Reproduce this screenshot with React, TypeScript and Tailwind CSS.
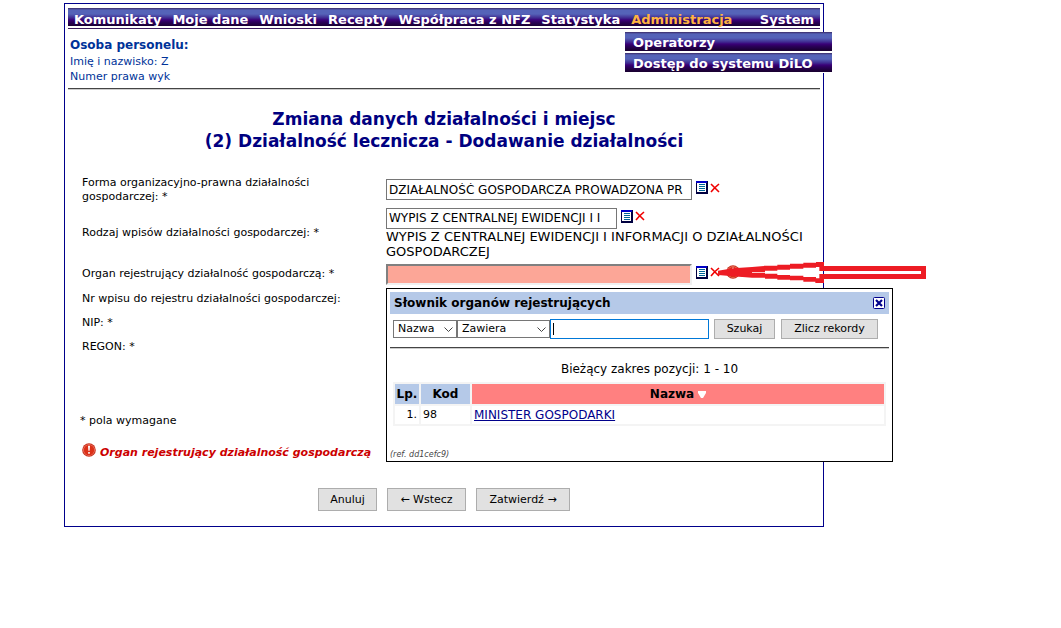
import type { ReactNode } from "react";

const menu = [
  "Komunikaty",
  "Moje dane",
  "Wnioski",
  "Recepty",
  "Współpraca z NFZ",
  "Statystyka",
  "Administracja",
];
const submenu = ["Operatorzy", "Dostęp do systemu DiLO"];
const rows = [{ lp: 1, code: "98", name: "MINISTER GOSPODARKI" }];

const barStyle =
  "bg-[linear-gradient(to_bottom,#3b2a66_0px,#5563b8_2px,#5563b8_6px,#3f2a90_10px,#3a0078_12px,#2c005c_14px,#1a0033_18px)]";
const buttonStyle =
  "cursor-pointer border border-[#adadad] bg-[#e1e1e1] text-[11px] leading-4 text-black";

const ListIcon = () => (
  <svg width="12" height="13" viewBox="0 0 12 13" shapeRendering="crispEdges" aria-hidden="true">
    <rect width="12" height="13" fill="#000040" />
    <rect width="11" height="2" fill="#0000c8" />
    <rect x="1" y="2" width="9" height="9" fill="#fff" />
    <path d="M3 3.5h6M3 5.5h6M3 7.5h6M3 9.5h6" stroke="#006699" />
  </svg>
);

const CrossIcon = () => (
  <svg width="10" height="10" viewBox="0 0 10 10" aria-hidden="true">
    <path d="M1 1l3.500 3.500L9 9M9 1L4.500 5L1 9" stroke="#f00000" strokeWidth="1.6" fill="none" />
  </svg>
);

const ErrorIcon = () => (
  <svg width="14" height="14" viewBox="0 0 14 14" className="shrink-0" aria-hidden="true">
    <circle cx="7" cy="7" r="6.800" fill="#c8301c" />
    <circle cx="7" cy="7" r="5.800" fill="#f08878" />
    <circle cx="7" cy="7" r="5.200" fill="#dc3018" />
    <path d="M6 2.800h2l-.4 5H6.400zM6.200 9h1.600v1.700H6.200z" fill="#fff" />
  </svg>
);

const Divider = () => <hr className="h-[2px] border-0 border-t border-[#444] bg-[#ccc]" />;

const PickerButtons = ({ what }: { what: string }) => (
  <span className="mb-1 ml-1 flex items-center gap-[2px]">
    <button type="button" aria-label={`Wybierz: ${what}`} className="cursor-pointer">
      <ListIcon />
    </button>
    <button type="button" aria-label={`Wyczyść: ${what}`} className="cursor-pointer">
      <CrossIcon />
    </button>
  </span>
);

const Row = ({
  id,
  label,
  className,
  children,
}: {
  id?: string;
  label: string;
  className: string;
  children?: ReactNode;
}) => (
  <div className={`flex items-center ${className}`}>
    <label htmlFor={id} className="w-[304px] shrink-0 pr-8 leading-[14px] text-[11px]">
      {label}
    </label>
    <div className="min-w-0 flex-1">{children}</div>
  </div>
);

const TopMenu = () => (
  <nav className="relative z-10 border-b border-[#3a1a5c] pb-[2px] text-[13px] font-bold text-white">
    <ul className={`flex h-[18px] items-center gap-[11px] px-[6px] pt-[5px] ${barStyle}`}>
      {menu.map((item) => (
        <li key={item}>
          <a href="#" className={item === "Administracja" ? "text-[#ffb440]" : ""}>
            {item}
          </a>
        </li>
      ))}
      <li className="ml-auto">
        <a href="#">System</a>
      </li>
    </ul>
    <ul className="absolute top-6 -right-3 flex w-[207px] flex-col gap-[2px] bg-white pb-px">
      {submenu.map((item) => (
        <li key={item} className={`h-[19px] px-2 leading-[22px] ${barStyle}`}>
          <a href="#">{item}</a>
        </li>
      ))}
    </ul>
  </nav>
);

const FilterSelect = ({
  label,
  options,
  className,
}: {
  label: string;
  options: string[];
  className: string;
}) => (
  <div className={`relative h-[18px] ${className}`}>
    <select
      aria-label={label}
      className="block h-full w-full appearance-none border border-[#767676] bg-white pl-1 text-[11px] leading-4"
    >
      {options.map((option) => (
        <option key={option}>{option}</option>
      ))}
    </select>
    <svg
      width="9"
      height="6"
      viewBox="0 0 9 6"
      className="pointer-events-none absolute top-[7px] right-1"
      aria-hidden="true"
    >
      <path d="M0.500 0.500l4 4l4-4" stroke="#444" fill="none" />
    </svg>
  </div>
);

const Dictionary = () => (
  <section className="absolute top-[288px] left-[386px] z-10 w-[507px] border border-black bg-white p-[3px] pb-0">
    <header className="flex h-[22px] items-center justify-between bg-[#b5c9e8] px-1 text-[12px] font-bold">
      <h2>Słownik organów rejestrujących</h2>
      <button type="button" aria-label="Zamknij" className="cursor-pointer">
        <svg width="12" height="12" viewBox="0 0 12 12" aria-hidden="true">
          <rect x="0.500" y="0.500" width="11" height="11" rx="1" fill="#fff" stroke="#00008b" />
          <path d="M3 3l6 6M9 3L3 9" stroke="#00008b" strokeWidth="2.200" />
        </svg>
      </button>
    </header>
    <form className="flex h-[33px] items-center px-[3px] pb-1">
      <FilterSelect label="Kolumna" options={["Nazwa", "Kod"]} className="w-16" />
      <FilterSelect label="Warunek" options={["Zawiera", "Równe"]} className="w-[93px]" />
      <div className="relative">
        <input
          aria-label="Szukana wartość"
          className="peer block h-5 w-[159px] border border-[#0078d7] px-[3px] text-[12px] outline-none"
        />
        <span className="pointer-events-none absolute top-1 left-[3px] h-3 w-px bg-black peer-focus:hidden" />
      </div>
      <button type="button" className={`ml-[5px] h-5 w-[61px] ${buttonStyle}`}>
        Szukaj
      </button>
      <button type="button" className={`ml-[6px] h-5 w-[97px] ${buttonStyle}`}>
        Zlicz rekordy
      </button>
    </form>
    <Divider />
    <p className="pt-3 pb-[5px] pl-5 text-center text-[12px] leading-4">
      Bieżący zakres pozycji: 1 - 10
    </p>
    <table className="ml-[3px] w-[493px] border-separate border-spacing-[2px] bg-[#f4f4f4] text-left">
      <thead className="text-[12px] leading-5">
        <tr>
          <th className="w-6 bg-[#b5c9e8] text-center">Lp.</th>
          <th className="w-[49px] bg-[#b5c9e8] text-center">Kod</th>
          <th className="bg-[#ff8080] text-center">
            Nazwa
            <svg width="8" height="7" viewBox="0 0 8 7" className="ml-1 inline" aria-hidden="true">
              <path d="M0 0h8v2L5 7H3L0 2z" fill="#fff" />
            </svg>
          </th>
        </tr>
      </thead>
      <tbody className="text-[11px] leading-[18px]">
        {rows.map((row) => (
          <tr key={row.code}>
            <td className="bg-white pr-[2px] text-right">{row.lp}.</td>
            <td className="bg-white pl-[2px]">{row.code}</td>
            <td className="bg-white pl-[2px] text-[12px]">
              <a href="#" className="text-[#00008b] underline">
                {row.name}
              </a>
            </td>
          </tr>
        ))}
      </tbody>
    </table>
    <p className="mt-[22px] text-[8px] italic leading-[13px] text-[#444]">(ref. dd1cefc9)</p>
  </section>
);

// hand-drawn marker pointing at the clear button
const Pointer = () => (
  <svg
    width="208"
    height="21"
    viewBox="84 36 624 63"
    className="pointer-events-none absolute top-[262px] left-[718px] z-20"
    fill="#ed1c24"
    aria-hidden="true"
  >
    <path d="M84 62L129 55L186 51V83L129 79L84 75z" />
    <path d="M186 51L222 48V47H262V44H300V41H340V38H378V36H402V48H708V87H402V99H376V95H340V91H300V89H262V86H225V83H186V68H225V71H262V75H300V77H340V81H378V85H388V72H693V63H388V51H378V53H340V56H300V59H262V62H225V66H186z" />
  </svg>
);

export default function App() {
  return (
    <div className="relative bg-white pt-[3px] pr-[237px] pb-10 pl-16 font-['DejaVu_Sans',Verdana,sans-serif] text-black">
      <main className="border border-[#00008b] px-[3px] pt-1 pb-[15px]">
        <TopMenu />
        <div className="mt-2 mb-1 px-[2px] text-[11px] leading-[15px] text-[#003399]">
          <p className="text-[12px] font-bold leading-[17px]">Osoba personelu:</p>
          <p>Imię i nazwisko: Z</p>
          <p>Numer prawa wyk</p>
        </div>
        <Divider />

        <h1 className="mt-[18px] text-center text-[17px] font-bold leading-[22px] text-[#000080]">
          Zmiana danych działalności i miejsc
          <br />
          (2) Działalność lecznicza - Dodawanie działalności
        </h1>

        <form className="mt-[22px] px-[14px]">
          <Row id="forma" label="Forma organizacyjno-prawna działalności gospodarczej: *" className="h-[31px]">
            <div className="flex items-center">
              <input
                id="forma"
                defaultValue="DZIAŁALNOŚĆ GOSPODARCZA PROWADZONA PR"
                className="h-[21px] w-[306px] border border-[#767676] px-[2px] text-[12px]"
              />
              <PickerButtons what="forma" />
            </div>
          </Row>
          <Row id="rodzaj" label="Rodzaj wpisów działalności gospodarczej: *" className="h-14">
            <div className="flex items-center">
              <input
                id="rodzaj"
                defaultValue="WYPIS Z CENTRALNEJ EWIDENCJI I I"
                className="h-[21px] w-[231px] border border-[#767676] px-[2px] text-[12px]"
              />
              <PickerButtons what="rodzaj" />
            </div>
            <p className="text-[13px] leading-[15px]">
              WYPIS Z CENTRALNEJ EWIDENCJI I INFORMACJI O DZIAŁALNOŚCI GOSPODARCZEJ
            </p>
          </Row>
          <Row id="organ" label="Organ rejestrujący działalność gospodarczą: *" className="h-[26px]">
            <div className="flex items-center">
              <input
                id="organ"
                className="h-[21px] w-[306px] border-2 border-t-[#808080] border-r-[#f0f0f0] border-b-[#f0f0f0] border-l-[#808080] bg-[#fca697] px-[2px] text-[12px]"
              />
              <PickerButtons what="organ" />
              <span className="mb-1 ml-[6px]">
                <ErrorIcon />
              </span>
            </div>
          </Row>
          <Row label="Nr wpisu do rejestru działalności gospodarczej:" className="h-6 whitespace-nowrap" />
          <Row label="NIP: *" className="h-6" />
          <Row label="REGON: *" className="h-6" />
        </form>

        <p className="mt-[54px] px-3 text-[11px] leading-4">* pola wymagane</p>
        <p className="mt-[14px] flex gap-1 px-[14px] text-[11px] font-bold italic leading-4 text-[#cc0000]">
          <ErrorIcon />
          <span className="pt-[2px]">Organ rejestrujący działalność gospodarczą</span>
        </p>

        <div className="mt-[27px] flex justify-center gap-[10px]">
          <button type="button" className={`h-[23px] w-[59px] ${buttonStyle}`}>
            Anuluj
          </button>
          <button type="button" className={`h-[23px] w-[79px] ${buttonStyle}`}>
            ← Wstecz
          </button>
          <button type="button" className={`h-[23px] w-[94px] ${buttonStyle}`}>
            Zatwierdź →
          </button>
        </div>
      </main>
      <Dictionary />
      <Pointer />
    </div>
  );
}
